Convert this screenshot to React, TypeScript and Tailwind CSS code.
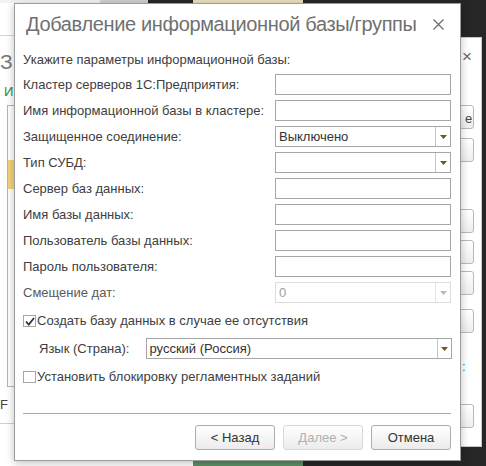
import React from 'react'

const font = { fontFamily: '"Liberation Sans", Arial, sans-serif' }

function Arrow({ disabled }: { disabled?: boolean }) {
  return (
    <svg width="7" height="4" viewBox="0 0 7 4" className="block">
      <path d="M0 0 H7 L3.5 4 Z" fill={disabled ? '#b8b8b8' : '#6b5a1c'} />
    </svg>
  )
}

function Field({ select, value, disabled }: { select?: boolean; value?: string; disabled?: boolean }) {
  return (
    <div
      className={`w-[176px] h-[21px] flex items-stretch border bg-white ${
        disabled ? 'border-[#dcdcdc]' : 'border-[#a6a6a6]'
      }`}
    >
      <div className={`flex-1 flex items-center px-[3px] text-[13px] ${disabled ? 'text-[#a0a0a0]' : 'text-[#333]'}`}>
        {value}
      </div>
      {select && (
        <div className={`w-[15px] flex items-center justify-center border-l ${disabled ? 'border-[#e4e4e4]' : 'border-[#c4c4c4]'}`}>
          <Arrow disabled={disabled} />
        </div>
      )}
    </div>
  )
}

function Check({ checked }: { checked?: boolean }) {
  return (
    <div className="w-[13px] h-[12px] border border-[#a6a6a6] bg-white flex items-center justify-center">
      {checked && (
        <svg width="10" height="9" viewBox="0 0 10 9">
          <path d="M1 4.5 L3.8 7.5 L9 1" stroke="#333" strokeWidth="1.8" fill="none" />
        </svg>
      )}
    </div>
  )
}

const rows: { label: string; select?: boolean; value?: string; disabled?: boolean }[] = [
  { label: 'Кластер серверов 1С:Предприятия:' },
  { label: 'Имя информационной базы в кластере:' },
  { label: 'Защищенное соединение:', select: true, value: 'Выключено' },
  { label: 'Тип СУБД:', select: true },
  { label: 'Сервер баз данных:' },
  { label: 'Имя базы данных:' },
  { label: 'Пользователь базы данных:' },
  { label: 'Пароль пользователя:' },
  { label: 'Смещение дат:', select: true, value: '0', disabled: true },
]

function Button({ children, disabled }: { children: React.ReactNode; disabled?: boolean }) {
  return (
    <div
      className={`w-[80px] h-[25px] rounded-[3px] border flex items-center justify-center text-[13px] bg-gradient-to-b from-white to-[#ececec] ${
        disabled ? 'border-[#d8d8d8] text-[#b0b0b0]' : 'border-[#acacac] text-[#333]'
      }`}
    >
      {children}
    </div>
  )
}

export default function App() {
  return (
    <div className="relative w-[486px] h-[466px] overflow-hidden bg-[#262626]" style={font}>
      {/* desktop behind */}
      <div className="absolute left-0 top-0 w-[148px] h-[466px] bg-white" />
      <div className="absolute left-0 top-0 w-[100px] h-[3px] bg-[#f2f2f2]" />
      <div className="absolute left-[100px] top-0 w-[48px] h-[3px] bg-[#cfcfcf]" />
      <div className="absolute left-[193px] top-0 w-[110px] h-[3px] bg-[#e9dfbf]" />
      <div className="absolute left-0 top-[35px] w-[14px] h-px bg-[#d4d4d4]" />
      <div className="absolute left-0 top-[46px] text-[21px] text-[#777]">З</div>
      <div className="absolute left-[4px] top-[82px] text-[13px] text-[#2e8b3a]">И</div>
      <div className="absolute left-[7px] top-[105px] w-[10px] h-[282px] border border-[#b5b5b5] bg-white" />
      <div className="absolute left-[8px] top-[160px] w-[6px] h-[29px] bg-[#f5d27a]" />
      <div className="absolute left-0 top-[395px] text-[13px] text-[#444]">F</div>
      <div className="absolute left-0 top-[423px] w-[14px] h-px bg-[#cfcfcf]" />
      <div className="absolute left-0 top-[460px] w-[193px] h-[6px] bg-white" />
      <div className="absolute left-[193px] top-[460px] w-[110px] h-[6px] bg-[#5b8f60]" />

      {/* right window behind */}
      <div className="absolute left-[440px] top-[37px] w-[42px] h-[410px] bg-white border border-[#c8c8c8]">
        <div className="absolute left-[21px] top-[10px] text-[17px] leading-none text-[#666]">×</div>
        {[67, 100, 171, 202, 233, 271, 366].map(t => (
          <div key={t} className="absolute left-[12px] w-[21px] h-[24px] rounded-[3px] border border-[#b9b9b9] bg-gradient-to-b from-white to-[#eee]" style={{ top: t }} />
        ))}
        <div className="absolute left-[24px] top-[71px] text-[13px] text-[#444]">е</div>
        <div className="absolute left-[21px] top-[319px] text-[13px] text-[#3a7bd5]">:</div>
      </div>

      {/* dialog */}
      <div className="absolute left-[14px] top-[3px] w-[447px] h-[458px] bg-white border border-[#9c9c9c] shadow-[0_2px_8px_rgba(0,0,0,0.25)] flex flex-col">
        <div className="h-[38px] flex items-center justify-between pl-[11px] pr-[16px] pt-[2px]">
          <div className="text-[20px] text-[#707070] leading-none whitespace-nowrap tracking-[-0.35px]">Добавление информационной базы/группы</div>
          <svg width="11" height="11" viewBox="0 0 11 11" className="shrink-0">
            <path d="M0.5 0.5 L10.5 10.5 M10.5 0.5 L0.5 10.5" stroke="#6a6a6a" strokeWidth="1.2" />
          </svg>
        </div>

        <div className="px-[8px] flex flex-col">
          <div className="h-[16px] mt-[10px] flex items-center text-[13px] text-[#404040]">Укажите параметры информационной базы:</div>
          <div className="mt-[6px] flex flex-col gap-[5px]">
            {rows.map(r => (
              <div key={r.label} className="flex items-center justify-between h-[21px] pr-[1px]">
                <div className={`text-[13px] ${r.disabled ? 'text-[#5a5a5a]' : 'text-[#404040]'}`}>{r.label}</div>
                <Field select={r.select} value={r.value} disabled={r.disabled} />
              </div>
            ))}
          </div>

          <div className="mt-[12px] flex items-center h-[12px] text-[13px] text-[#404040]">
            <Check checked />
            <span className="ml-[1px]">Создать базу данных в случае ее отсутствия</span>
          </div>

          <div className="mt-[11px] flex items-center h-[21px] pl-[16px]">
            <div className="w-[108px] text-[13px] text-[#404040]">Язык (Страна):</div>
            <div className="w-[307px] h-[21px] flex border border-[#a6a6a6]">
              <div className="flex-1 flex items-center px-[2px] text-[13px] text-[#333]">русский (Россия)</div>
              <div className="w-[14px] flex items-center justify-center border-l border-[#c4c4c4]">
                <Arrow />
              </div>
            </div>
          </div>

          <div className="mt-[12px] flex items-center h-[12px] text-[13px] text-[#404040]">
            <Check />
            <span className="ml-[1px]">Установить блокировку регламентных заданий</span>
          </div>

          <div className="mt-[30px] h-px bg-[#a8a8a8] mr-[1px]" />

          <div className="mt-[11px] flex justify-end gap-[8px] pr-[1px]">
            <Button>&lt; Назад</Button>
            <Button disabled>Далее &gt;</Button>
            <Button>Отмена</Button>
          </div>
        </div>
      </div>
    </div>
  )
}
